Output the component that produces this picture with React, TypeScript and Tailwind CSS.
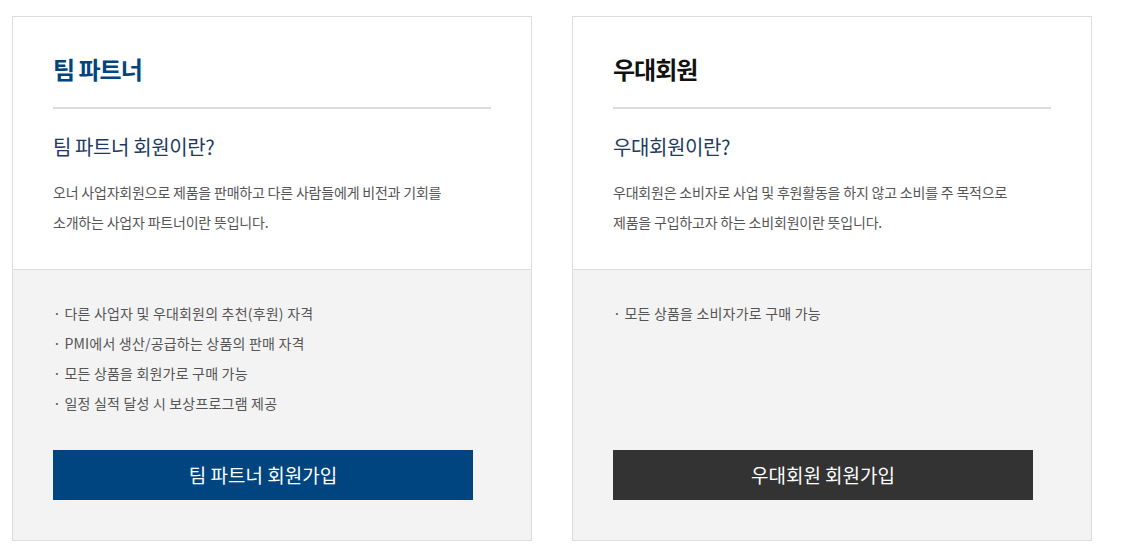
import React from 'react';

const font = { fontFamily: '"Noto Sans CJK KR", "Noto Sans", sans-serif' };

type Card = {
  title: string;
  titleClass: string;
  subtitle: string;
  desc: string[];
  items: string[];
  button: string;
  buttonClass: string;
};

const cards: Card[] = [
  {
    title: '팀 파트너',
    titleClass: 'text-[#00457f]',
    subtitle: '팀 파트너 회원이란?',
    desc: [
      '오너 사업자회원으로 제품을 판매하고 다른 사람들에게 비전과 기회를',
      '소개하는 사업자 파트너이란 뜻입니다.',
    ],
    items: [
      '다른 사업자 및 우대회원의 추천(후원) 자격',
      'PMI에서 생산/공급하는 상품의 판매 자격',
      '모든 상품을 회원가로 구매 가능',
      '일정 실적 달성 시 보상프로그램 제공',
    ],
    button: '팀 파트너 회원가입',
    buttonClass: 'bg-[#00457f]',
  },
  {
    title: '우대회원',
    titleClass: 'text-[#111111]',
    subtitle: '우대회원이란?',
    desc: [
      '우대회원은 소비자로 사업 및 후원활동을 하지 않고 소비를 주 목적으로',
      '제품을 구입하고자 하는 소비회원이란 뜻입니다.',
    ],
    items: ['모든 상품을 소비자가로 구매 가능'],
    button: '우대회원 회원가입',
    buttonClass: 'bg-[#333333]',
  },
];

const MemberCard = ({ card }: { card: Card }) => (
  <div className="w-[520px] border border-[#dddddd] bg-white flex flex-col">
    {/* top */}
    <div className="px-10 pt-[35px] pb-[32px] border-b border-[#dddddd]">
      <h2 className={`text-[24px] leading-[34px] font-bold tracking-[-1px] ${card.titleClass}`}>{card.title}</h2>
      <div className="mt-[21px] h-[2px] bg-[#dddddd]" />
      <h3 className="mt-[23px] text-[20px] leading-[30px] text-[#1c3a62] tracking-[-0.4px]">{card.subtitle}</h3>
      <div className="mt-[15px]">
        {card.desc.map((d) => (
          <p key={d} className="text-[14px] leading-[30px] text-[#555555] tracking-[-0.2px]">
            {d}
          </p>
        ))}
      </div>
    </div>
    {/* bottom */}
    <div className="flex-1 bg-[#f3f3f3] px-10 pt-[28px] pb-[40px] flex flex-col">
      <ul className="flex-1">
        {card.items.map((it) => (
          <li key={it} className="text-[14px] leading-[30px] text-[#555555] tracking-[0.2px]">
            · {it}
          </li>
        ))}
      </ul>
      <button
        className={`mt-[32px] w-[420px] h-[50px] text-white text-[19px] flex items-center justify-center ${card.buttonClass}`}
      >
        {card.button}
      </button>
    </div>
  </div>
);

export default function App() {
  return (
    <div className="w-[1130px] bg-white pt-4 pb-[18px] pl-3 flex gap-10" style={font}>
      {cards.map((c) => (
        <MemberCard key={c.title} card={c} />
      ))}
    </div>
  );
}
